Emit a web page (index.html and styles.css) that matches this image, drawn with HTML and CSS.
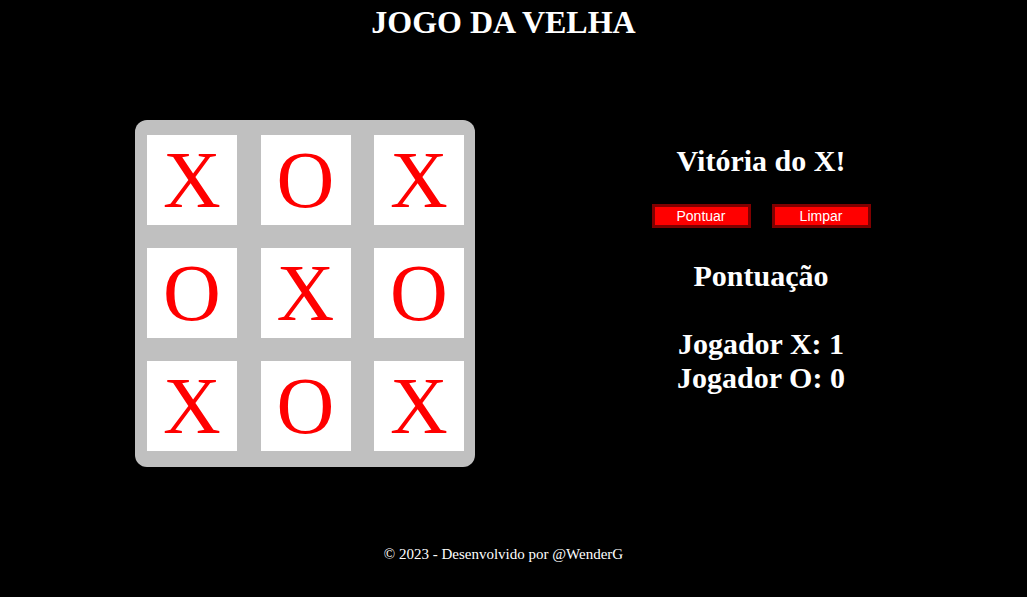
FILE: index.html
```html
<!DOCTYPE html>
<html lang="pt-BR">
<head>
<meta charset="utf-8">
<title>Jogo da Velha</title>
<link rel="stylesheet" href="styles.css">
</head>
<body>
<h1 class="title">JOGO DA VELHA</h1>
<main class="game">
  <div class="board">
    <div class="cell">X</div>
    <div class="cell">O</div>
    <div class="cell">X</div>
    <div class="cell">O</div>
    <div class="cell">X</div>
    <div class="cell">O</div>
    <div class="cell">X</div>
    <div class="cell">O</div>
    <div class="cell">X</div>
  </div>
  <section class="panel">
    <p class="status">Vitória do X!</p>
    <div class="actions">
      <button class="btn">Pontuar</button>
      <button class="btn">Limpar</button>
    </div>
    <p class="score-title">Pontuação</p>
    <p class="score">Jogador X: 1<br>Jogador O: 0</p>
  </section>
</main>
<footer class="footer">© 2023 - Desenvolvido por @WenderG</footer>
</body>
</html>
```
FILE: styles.css
```css
html, body {
  margin: 0;
  padding: 0;
  background: #000;
  color: #fff;
  font-family: "Liberation Serif", "Times New Roman", serif;
  height: 100%;
}

body {
  padding-right: 20px;
  box-sizing: border-box;
}

.title {
  margin: 0;
  padding-top: 4px;
  font-size: 32px;
  font-weight: bold;
  text-align: center;
  line-height: 37px;
}

.game {
  display: flex;
  align-items: flex-start;
  padding-left: 135px;
  margin-top: 79px;
}

.board {
  display: grid;
  grid-template-columns: repeat(3, 90px);
  grid-auto-rows: 90px;
  column-gap: 23.5px;
  row-gap: 23px;
  padding: 15px 11px 16px 12px;
  background: #c0c0c0;
  border-radius: 12px;
}

.cell {
  background: #fff;
  color: #ff0000;
  font-size: 80px;
  display: flex;
  align-items: center;
  justify-content: center;
  line-height: 1;
}

.panel {
  width: 300px;
  margin-left: 136px;
  margin-top: 24px;
  text-align: center;
}

.status,
.score-title,
.score {
  margin: 0;
  font-size: 30px;
  font-weight: bold;
}

.actions {
  display: flex;
  justify-content: center;
  gap: 21px;
  margin-top: 26px;
}

.btn {
  width: 99px;
  height: 24px;
  padding: 0;
  background: #ff0000;
  color: #fff;
  border: 3px solid #800000;
  font-family: "Liberation Sans", Arial, sans-serif;
  font-size: 14px;
  line-height: 18px;
}

.score-title {
  margin-top: 31px;
}

.score {
  margin-top: 34px;
}

.footer {
  margin-top: 79px;
  text-align: center;
  font-size: 15px;
}
```
